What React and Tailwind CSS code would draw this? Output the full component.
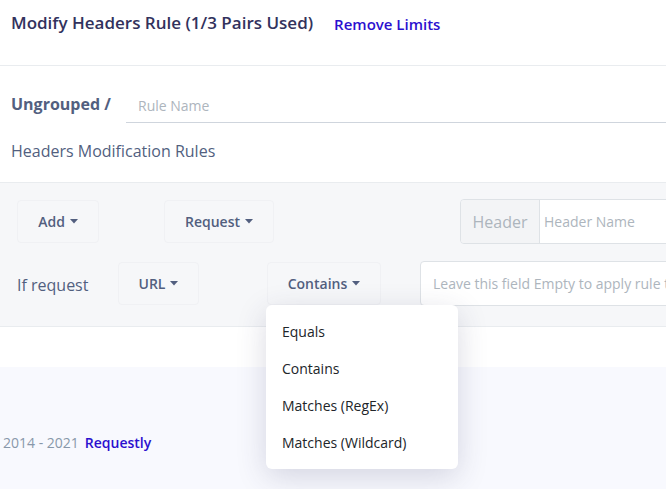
import React from "react";

function Caret() {
  return (
    <svg width="8" height="5" viewBox="0 0 8 5" className="ml-[5px] inline-block">
      <path d="M0 0 L8 0 L4 4.5 Z" fill="currentColor" />
    </svg>
  );
}

function DropBtn({ children, w }) {
  return (
    <div
      className={`flex h-[43px] shrink-0 ${w} items-center justify-center rounded-[4px] border border-[#f0f1f4] text-[14px] font-semibold text-[#525f7f]`}
    >
      {children}
      <Caret />
    </div>
  );
}

export default function App() {
  return (
    <div
      className="relative h-[489px] w-[666px] overflow-hidden bg-[#f8f9fe]"
      style={{ fontFamily: '"Open Sans", sans-serif' }}
    >
      <div className="bg-white">
        {/* header */}
        <div className="flex h-[66px] items-start border-b border-[#e9ecef] pl-[11px] pt-[10px]">
          <div className="text-[17px] font-semibold leading-[26px] text-[#32325d]">
            Modify Headers Rule (1/3 Pairs Used)
          </div>
          <div className="ml-[21px] mt-[1px] text-[15px] font-semibold leading-[26px] text-[#2b10cf]">
            Remove Limits
          </div>
        </div>

        {/* name */}
        <div className="flex h-[57px] items-end pl-[11px]">
          <div className="mb-[7px] w-[115px] shrink-0 text-[16px] font-bold text-[#525f7f]">Ungrouped /</div>
          <div className="flex h-[36px] flex-1 items-center border-b border-[#cfd5dd] pl-[12px] pt-[2px] text-[14px] text-[#adb5bd]">
            Rule Name
          </div>
        </div>
        <div className="flex h-[59px] items-center pb-[3px] pl-[11px] text-[16px] text-[#525f7f]">
          Headers Modification Rules
        </div>

        {/* panel */}
        <div className="overflow-hidden border-y border-[#e9ecef] bg-[#f6f7f9] pb-[20px] pt-[16px]">
          <div className="flex h-[45px] items-center">
            <div className="ml-[17px]">
              <DropBtn w="w-[82px]">Add</DropBtn>
            </div>
            <div className="ml-[65px]">
              <DropBtn w="w-[110px]">Request</DropBtn>
            </div>
            <div className="ml-[186px] flex h-[45px] w-[320px] shrink-0 overflow-hidden rounded-[4px] border border-[#dee2e6]">
              <div className="flex w-[79px] shrink-0 items-center justify-center border-r border-[#dee2e6] bg-[#f3f4f6] text-[16px] text-[#adb5bd]">
                Header
              </div>
              <div className="flex flex-1 items-center whitespace-nowrap bg-white pl-[4px] text-[14px] text-[#adb5bd]">
                Header Name
              </div>
            </div>
          </div>
          <div className="mt-[17px] flex h-[45px] items-center">
            <div className="ml-[17px] w-[101px] shrink-0 whitespace-nowrap pt-[2px] text-[16px] text-[#525f7f]">
              If request
            </div>
            <DropBtn w="w-[81px]">URL</DropBtn>
            <div className="ml-[68px]">
              <DropBtn w="w-[114px]">Contains</DropBtn>
            </div>
            <div className="ml-[39px] flex h-[45px] w-[340px] shrink-0 items-center whitespace-nowrap rounded-[4px] border border-[#dee2e6] bg-white pl-[12px] text-[14px] text-[#adb5bd]">
              Leave this field Empty to apply rule to all URLs
            </div>
          </div>
        </div>
        <div className="h-[40px]" />
      </div>

      {/* footer */}
      <div className="mt-[65px] flex items-center pl-[3px] text-[14px]">
        <span className="text-[#8898aa]">2014 - 2021</span>
        <span className="ml-[6px] font-semibold text-[#2b10cf]">Requestly</span>
      </div>

      {/* dropdown menu */}
      <div className="absolute left-[266px] top-[305px] w-[192px] rounded-[6px] bg-white py-[8px] shadow-[0_8px_30px_rgba(50,50,93,0.18)]">
        {["Equals", "Contains", "Matches (RegEx)", "Matches (Wildcard)"].map((t) => (
          <div key={t} className="flex h-[37px] items-center px-[16px] text-[14px] text-[#212529]">
            {t}
          </div>
        ))}
      </div>
    </div>
  );
}
